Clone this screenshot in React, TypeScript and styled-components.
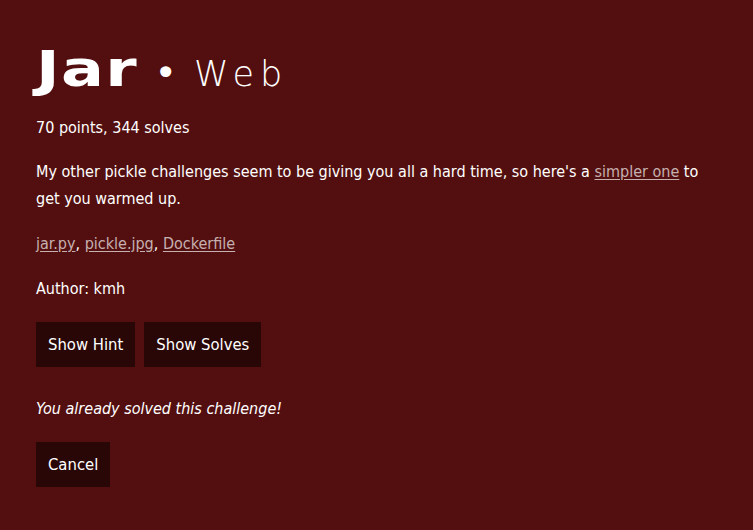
import React from "react";
import styled, { createGlobalStyle } from "styled-components";

const Global = createGlobalStyle`
  html, body { margin: 0; padding: 0; }
  body {
    background: #530f0f;
    color: #ffffff;
    font-family: "Liberation Sans Narrow", "DejaVu Sans Condensed", sans-serif;
    font-size: 16px;
  }
`;

const Page = styled.main`
  padding: 40px 36px 40px 36px;
  min-height: 530px;
  box-sizing: border-box;
`;

const Title = styled.h1`
  margin: 0;
  display: flex;
  align-items: baseline;
  line-height: 60px;
  font-weight: normal;
`;

const Name = styled.span`
  display: inline-block;
  font-family: "DejaVu Sans", sans-serif;
  font-weight: bold;
  font-size: 49px;
  letter-spacing: 1px;
  transform: scaleX(1.3);
  transform-origin: left center;
  margin-right: 24px;
`;

const Dot = styled.span`
  font-family: "DejaVu Sans", sans-serif;
  font-size: 38px;
  margin: 0 17px 0 16px;
`;

const Category = styled.span`
  font-family: "DejaVu Sans", sans-serif;
  font-weight: 200;
  font-size: 35px;
  letter-spacing: 6px;
`;

const Para = styled.p<{ $gap?: number }>`
  margin: ${(p) => p.$gap ?? 18}px 0 0 0;
  line-height: 27px;
`;

const Italic = styled(Para)`
  font-style: italic;
`;

const Link = styled.a`
  color: #c6b0b0;
  text-decoration: underline;
  text-underline-offset: 2px;
`;

const Buttons = styled.div<{ $gap?: number }>`
  display: flex;
  gap: 9px;
  margin-top: ${(p) => p.$gap ?? 20}px;
`;

const Button = styled.button`
  background: #2a0707;
  color: #ffffff;
  border: none;
  height: 45px;
  padding: 0 12px;
  font-family: inherit;
  font-size: 16.5px;
  cursor: pointer;
`;

export default function App() {
  return (
    <>
      <Global />
      <Page>
        <Title>
          <Name>Jar</Name>
          <Dot>•</Dot>
          <Category>Web</Category>
        </Title>
        <Para $gap={10}>70 points, 344 solves</Para>
        <Para $gap={17}>
          My other pickle challenges seem to be giving you all a hard time, so
          here's a <Link href="#">simpler one</Link> to get you warmed up.
        </Para>
        <Para $gap={18}>
          <Link href="#">jar.py</Link>, <Link href="#">pickle.jpg</Link>,{" "}
          <Link href="#">Dockerfile</Link>
        </Para>
        <Para $gap={18}>Author: kmh</Para>
        <Buttons $gap={20}>
          <Button>Show Hint</Button>
          <Button>Show Solves</Button>
        </Buttons>
        <Italic $gap={28}>You already solved this challenge!</Italic>
        <Buttons $gap={20}>
          <Button>Cancel</Button>
        </Buttons>
      </Page>
    </>
  );
}
